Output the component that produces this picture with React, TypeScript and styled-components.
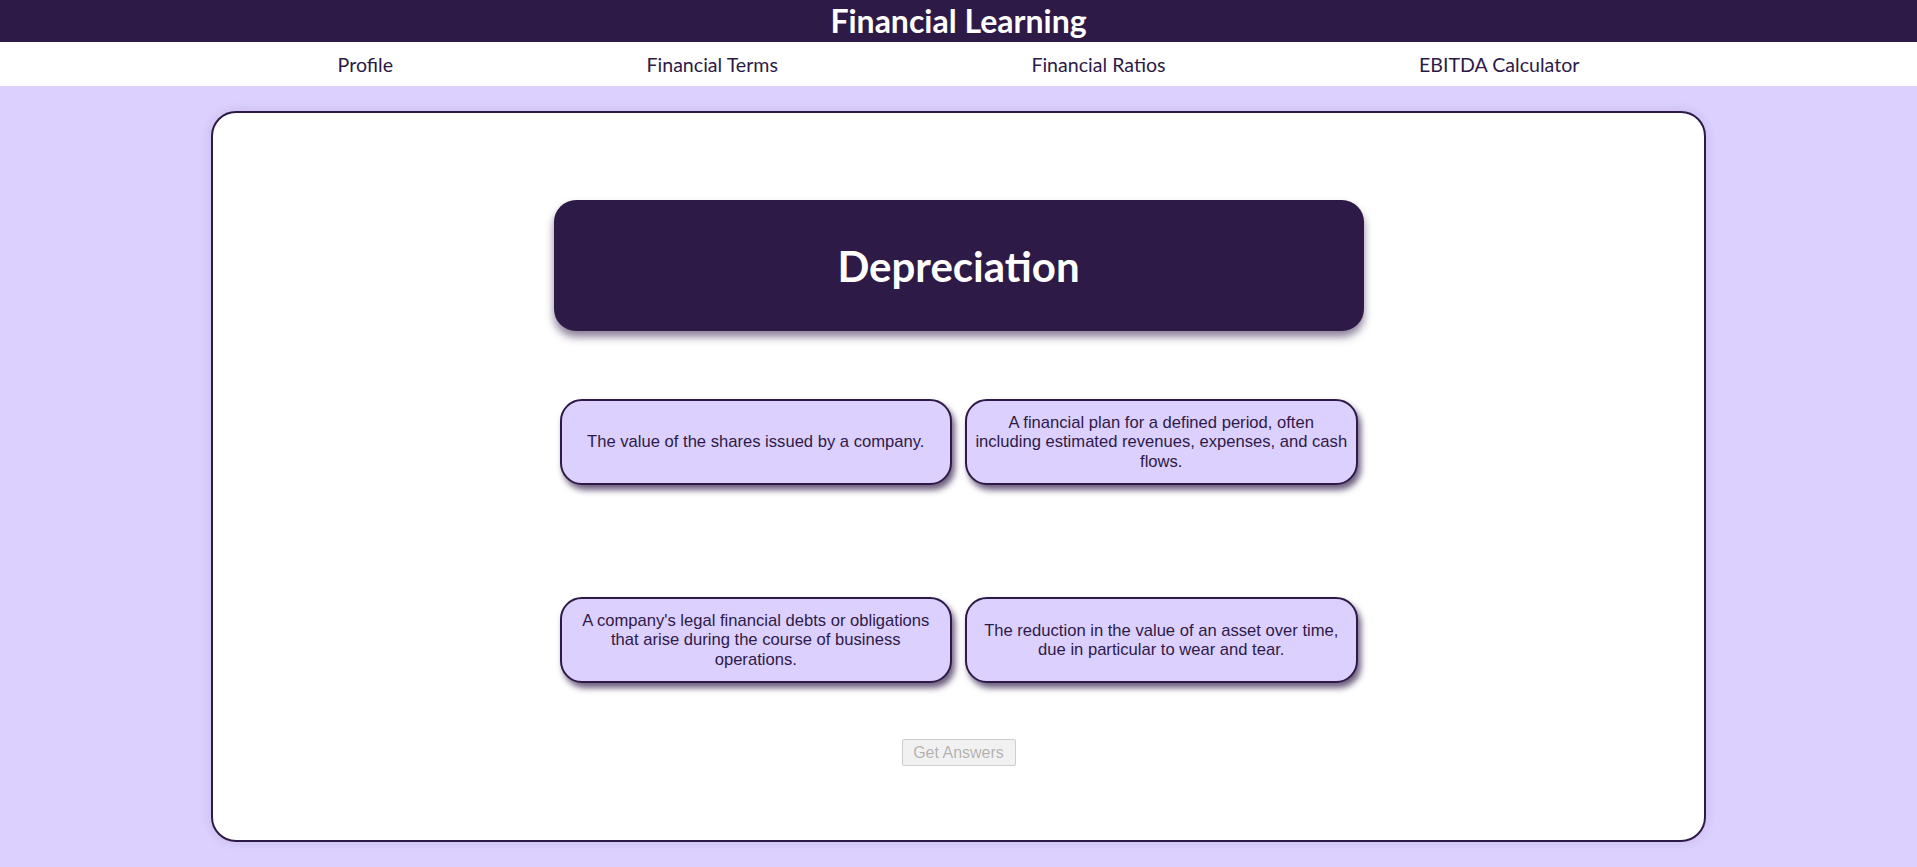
import React from "react";
import styled, { createGlobalStyle } from "styled-components";

const GlobalStyle = createGlobalStyle`
  * { box-sizing: border-box; }
  html, body { margin: 0; padding: 0; }
  body {
    background: #dcd0ff;
    font-family: Lato, "Open Sans", sans-serif;
  }
`;

const Header = styled.header`
  background: #2e1a47;
  height: 42px;
  display: flex;
  align-items: center;
  justify-content: center;
`;

const Title = styled.h1`
  margin: 0;
  color: #ffffff;
  font-size: 32px;
  line-height: 42px;
  font-weight: 700;
`;

const NavBar = styled.nav`
  background: #ffffff;
  height: 44px;
  display: flex;
  justify-content: center;
`;

const NavList = styled.ul`
  width: 78%;
  margin: 0;
  padding: 0;
  list-style: none;
  display: flex;
  justify-content: space-around;
  align-items: center;
`;

const NavItem = styled.li`
  color: #2e1a47;
  font-size: 19.6px;
  cursor: pointer;
`;

const Main = styled.main`
  padding: 25px 0;
  display: flex;
  justify-content: center;
`;

const Card = styled.section`
  width: 78%;
  background: #ffffff;
  border: 2px solid #2e1a47;
  border-radius: 25px;
  box-shadow: 0 0 12px rgba(46, 26, 71, 0.12);
  padding: 87px 0 74px;
  display: flex;
  flex-direction: column;
  align-items: center;
`;

const TermCard = styled.div`
  width: 810px;
  height: 131px;
  background: #2e1a47;
  border-radius: 22px;
  box-shadow: 0 6px 8px rgba(46, 26, 71, 0.55);
  display: flex;
  align-items: center;
  justify-content: center;
`;

const TermText = styled.h2`
  margin: 0;
  color: #ffffff;
  font-size: 42px;
  font-weight: 700;
`;

const AnswerGrid = styled.div`
  width: 810px;
  display: grid;
  grid-template-columns: 1fr 1fr;
  column-gap: 13px;
  row-gap: 112px;
  padding: 0 6px;
  margin-top: 68px;
`;

const AnswerCard = styled.button`
  height: 86px;
  background: #dcd0ff;
  border: 2px solid #2e1a47;
  border-radius: 22px;
  box-shadow: 3px 5px 6px rgba(46, 26, 71, 0.7);
  color: #2e1a47;
  font-family: "Liberation Sans", Arial, sans-serif;
  font-size: 16.6px;
  line-height: 19.5px;
  padding: 0 8px;
  text-align: center;
  cursor: pointer;
`;

const SubmitButton = styled.button`
  margin-top: 56px;
  width: 114px;
  height: 27px;
  font-family: "Liberation Sans", Arial, sans-serif;
  font-size: 16px;
  color: rgba(16, 16, 16, 0.3);
  background: rgba(239, 239, 239, 0.9);
  border: 1px solid rgba(118, 118, 118, 0.3);
  border-radius: 2px;
  padding: 0;
`;

const answers = [
  "The value of the shares issued by a company.",
  "A financial plan for a defined period, often including estimated revenues, expenses, and cash flows.",
  "A company's legal financial debts or obligations that arise during the course of business operations.",
  "The reduction in the value of an asset over time, due in particular to wear and tear.",
];

const navItems = ["Profile", "Financial Terms", "Financial Ratios", "EBITDA Calculator"];

export default function App() {
  return (
    <>
      <GlobalStyle />
      <Header>
        <Title>Financial Learning</Title>
      </Header>
      <NavBar>
        <NavList>
          {navItems.map((n) => (
            <NavItem key={n}>{n}</NavItem>
          ))}
        </NavList>
      </NavBar>
      <Main>
        <Card>
          <TermCard>
            <TermText>Depreciation</TermText>
          </TermCard>
          <AnswerGrid>
            {answers.map((a) => (
              <AnswerCard key={a}>{a}</AnswerCard>
            ))}
          </AnswerGrid>
          <SubmitButton disabled>Get Answers</SubmitButton>
        </Card>
      </Main>
    </>
  );
}
